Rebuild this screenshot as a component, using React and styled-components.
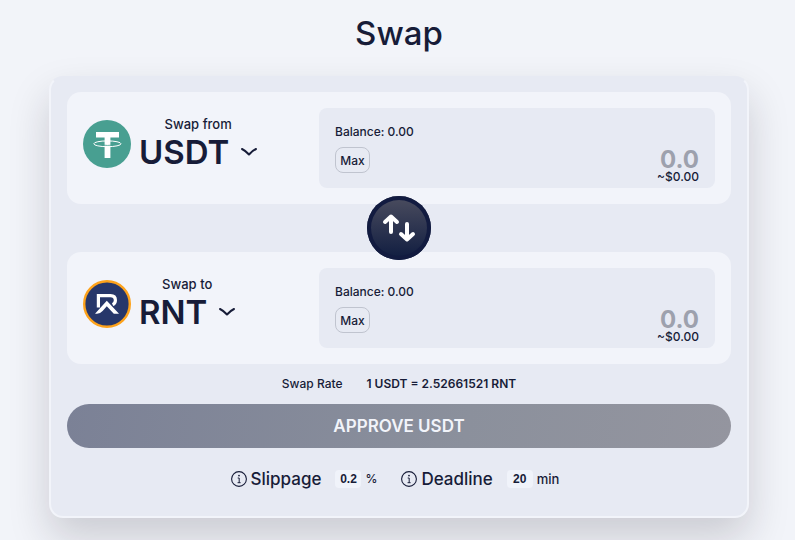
import React, { useState } from 'react'
import styled, { createGlobalStyle } from 'styled-components'

const GlobalStyle = createGlobalStyle`
  * {
    box-sizing: border-box;
  }
  body {
    margin: 0;
    background: #f2f4f9;
    color: #171c38;
    font-family: Inter, 'Open Sans', sans-serif;
  }
  button,
  input {
    margin: 0;
    padding: 0;
    border: 0;
    color: inherit;
    font-family: inherit;
  }
  button {
    cursor: pointer;
  }
`

const Page = styled.main`
  min-height: 100vh;
  padding: 13px 46px 22px 49px;
  overflow: hidden;
`

const Title = styled.h1`
  margin: 0 0 23px;
  font-size: 33px;
  line-height: 40px;
  font-weight: 500;
  text-align: center;
`

const Card = styled.section`
  display: flex;
  flex-direction: column;
  padding: 14px 16px 25px;
  border: 2px solid #f2f4fa;
  border-top-color: #e7eaf3;
  border-radius: 14px;
  background: #e7eaf3;
  box-shadow: 0 20px 40px rgba(30, 20, 40, 0.18);
`

const TokenRow = styled.div`
  display: grid;
  grid-template-columns: minmax(200px, 236px) 1fr;
  padding: 16px;
  border-radius: 14px;
  background: #f2f4fa;
`

const TokenSide = styled.div`
  display: flex;
  align-items: center;
  gap: 8px;
  height: 72px;
`

const TokenPicker = styled.div`
  display: flex;
  flex-direction: column;
  align-items: center;
`

const Small = styled.span`
  font-size: ${({ $large }) => ($large ? 13 : 12)}px;
  line-height: 16px;
  font-weight: ${({ $weight }) => $weight || 500};
`

const TokenButton = styled.button`
  display: flex;
  align-items: center;
  gap: 12px;
  background: none;
  font-size: 33px;
  line-height: 40px;
  font-weight: 600;
`

const AmountBox = styled.div`
  display: flex;
  justify-content: space-between;
  height: 80px;
  padding: 16px 16px 0;
  border-radius: 8px;
  background: #e7eaf3;
`

const BalanceSide = styled.div`
  display: flex;
  flex-direction: column;
  align-items: flex-start;
  gap: 7px;
`

const MaxButton = styled.button`
  width: 35px;
  height: 26px;
  border: 1px solid #c0c4cf;
  border-radius: 8px;
  background: none;
  font-size: 12px;
  font-weight: 500;
`

const AmountSide = styled.div`
  display: flex;
  flex-direction: column;
  align-items: flex-end;
  justify-content: flex-end;
  padding-bottom: 3px;
`

const AmountInput = styled.input`
  width: 160px;
  height: 20px;
  background: none;
  outline: none;
  font-size: 24px;
  line-height: 20px;
  font-weight: 700;
  text-align: right;
  &::placeholder {
    color: #9da1ad;
    opacity: 1;
  }
`

const FlipButton = styled.button`
  z-index: 1;
  display: flex;
  align-items: center;
  justify-content: center;
  align-self: center;
  width: 64px;
  height: 64px;
  margin: -8px 0;
  border-radius: 50%;
  background: linear-gradient(#4b4d5f, #0f1c40);
  box-shadow: inset 0 0 0 4px #121b40;
`

const Rate = styled.div`
  display: flex;
  justify-content: center;
  gap: 24px;
  padding: 12px 0;
`

const ApproveButton = styled.button`
  height: 44px;
  border-radius: 22px;
  background: linear-gradient(100deg, #7b8196, #8b909c 60%, #94959f);
  color: #f2f4fa;
  font-size: 17px;
  font-weight: 600;
`

const Settings = styled.div`
  display: flex;
  flex-wrap: wrap;
  justify-content: center;
  gap: 24px;
  padding: 19px 8px 0 0;
`

const Setting = styled.div`
  display: flex;
  align-items: center;
  gap: 4px;
`

const SettingLabel = styled.label`
  margin-right: 10px;
  font-size: 17px;
  line-height: 24px;
  font-weight: 500;
`

const SettingInput = styled.input`
  width: 26px;
  height: 18px;
  border-radius: 4px;
  background: #f0f3fa;
  outline: none;
  font-family: 'Liberation Sans', Arial, sans-serif;
  font-size: 12px;
  font-weight: 700;
  text-align: center;
`

const TetherLogo = () => (
  <svg width="48" height="48" viewBox="0 0 48 48" aria-hidden="true">
    <circle cx="24" cy="24" r="24" fill="#489f91" />
    <path d="M13 12h23v5.4h-8.6V38h-5.8V17.4H13z" fill="#fff" />
    <ellipse cx="24.4" cy="23.8" rx="13.6" ry="2.9" fill="none" stroke="#fff" />
    <path d="M21 25.2q3.4.5 7 0" fill="none" stroke="#489f91" strokeWidth="0.8" />
  </svg>
)

const RntLogo = () => (
  <svg width="48" height="48" viewBox="0 0 48 48" aria-hidden="true">
    <circle cx="24" cy="24" r="22.8" fill="#27376a" stroke="#fda21b" strokeWidth="2.4" />
    <path
      d="M15.4 27.6V15.6H27.5Q32.4 15.6 32.4 20.2Q32.4 23.4 29.6 24.6"
      fill="none"
      stroke="#fff"
      strokeWidth="3.2"
    />
    <path d="M12 33.8L23.8 20.8L36 33.8H30.8L23.8 26.2L19.6 31Q17 33.8 14 33.8z" fill="#fff" />
  </svg>
)

const Chevron = () => (
  <svg width="16" height="10" viewBox="0 0 16 10" aria-hidden="true">
    <path d="M1 2q4 2 7 5.5Q11 4 15 2" fill="none" stroke="#171c38" strokeWidth="2" strokeLinecap="round" strokeLinejoin="round" />
  </svg>
)

const FlipArrows = () => (
  <svg width="34" height="30" viewBox="0 0 34 30" aria-hidden="true">
    <g fill="none" stroke="#fff" strokeWidth="4" strokeLinecap="round" strokeLinejoin="round">
      <path d="M9 19V3.5M3 9l6-5.5L15 9" />
      <path d="M25 11v15.5M19 21l6 5.5 6-5.5" />
    </g>
  </svg>
)

const Info = () => (
  <svg width="16" height="16" viewBox="0 0 16 16" aria-hidden="true">
    <circle cx="8" cy="8" r="7.4" fill="none" stroke="#171c38" strokeWidth="1.1" />
    <circle cx="8" cy="4.6" r="0.9" fill="#171c38" />
    <path d="M6.7 7h1.5v4.6M6.6 11.7h3" fill="none" stroke="#171c38" />
  </svg>
)

const TokenPanel = ({ id, label, token, logo }) => {
  const [amount, setAmount] = useState('')
  return (
    <TokenRow>
      <TokenSide>
        {logo}
        <TokenPicker>
          <Small $large id={`${id}-label`}>
            {label}
          </Small>
          <TokenButton type="button" aria-describedby={`${id}-label`}>
            {token}
            <Chevron />
          </TokenButton>
        </TokenPicker>
      </TokenSide>
      <AmountBox>
        <BalanceSide>
          <Small>Balance: 0.00</Small>
          <MaxButton type="button">Max</MaxButton>
        </BalanceSide>
        <AmountSide>
          <AmountInput
            aria-labelledby={`${id}-label`}
            placeholder="0.0"
            value={amount}
            onChange={e => setAmount(e.target.value)}
          />
          <Small>~$0.00</Small>
        </AmountSide>
      </AmountBox>
    </TokenRow>
  )
}

const App = () => (
  <>
    <GlobalStyle />
    <Page>
      <Title>Swap</Title>
      <Card>
        <TokenPanel id="from" label="Swap from" token="USDT" logo={<TetherLogo />} />
        <FlipButton type="button" aria-label="Switch tokens">
          <FlipArrows />
        </FlipButton>
        <TokenPanel id="to" label="Swap to" token="RNT" logo={<RntLogo />} />
        <Rate>
          <Small>Swap Rate</Small>
          <Small $weight={600}>1 USDT = 2.52661521 RNT</Small>
        </Rate>
        <ApproveButton type="button">APPROVE USDT</ApproveButton>
        <Settings>
          <Setting>
            <Info />
            <SettingLabel htmlFor="slippage">Slippage</SettingLabel>
            <SettingInput id="slippage" defaultValue="0.2" />
            <Small>%</Small>
          </Setting>
          <Setting>
            <Info />
            <SettingLabel htmlFor="deadline">Deadline</SettingLabel>
            <SettingInput id="deadline" defaultValue="20" />
            <Small $large>min</Small>
          </Setting>
        </Settings>
      </Card>
    </Page>
  </>
)

export default App
